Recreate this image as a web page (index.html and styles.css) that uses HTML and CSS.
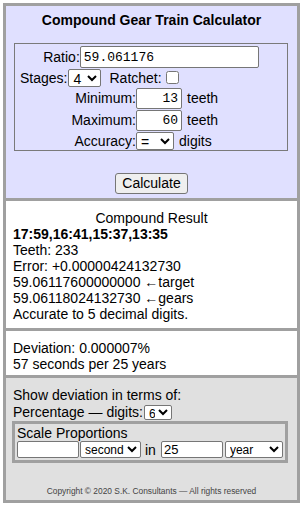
FILE: index.html
```html
<!DOCTYPE html>
<html lang="en">
<head>
    <meta charset="UTF-8">
    <meta name="viewport" content="width=device-width, initial-scale=1.0">
    <title>Compound Gear Train Calculator</title>
    <link rel="stylesheet" href="styles.css">
</head>
<body>
    <div class="calc">
        <div class="panel inputs">
            <h1>Compound Gear Train Calculator</h1>
            <div class="box">
                <div class="row row-ratio">
                    <label for="ratio">Ratio:</label>
                    <input type="text" id="ratio" class="mono ratio-input" value="59.061176">
                </div>
                <div class="row row-stages">
                    <label for="stages">Stages:</label>
                    <select id="stages" class="stages-select">
                        <option>4</option>
                    </select>
                    <label for="ratchet" class="ratchet-label">Ratchet:</label>
                    <input type="checkbox" id="ratchet">
                </div>
                <div class="row row-field">
                    <label for="minTeeth" class="field-label">Minimum:</label>
                    <input type="text" id="minTeeth" class="mono teeth-input" value="13">
                    <span class="unit">teeth</span>
                </div>
                <div class="row row-field">
                    <label for="maxTeeth" class="field-label">Maximum:</label>
                    <input type="text" id="maxTeeth" class="mono teeth-input" value="60">
                    <span class="unit">teeth</span>
                </div>
                <div class="row row-field row-last">
                    <label for="accuracy" class="field-label">Accuracy:</label>
                    <select id="accuracy" class="accuracy-select">
                        <option>=</option>
                    </select>
                    <span class="unit">digits</span>
                </div>
            </div>
            <div class="actions">
                <button onclick="calculate()">Calculate</button>
            </div>
        </div>

        <div class="panel result">
            <div class="result-title">Compound Result</div>
            <div class="gears">17:59,16:41,15:37,13:35</div>
            <div>Teeth: 233</div>
            <div>Error: +0.00000424132730</div>
            <div>59.06117600000000 &larr;target</div>
            <div>59.06118024132730 &larr;gears</div>
            <div>Accurate to 5 decimal digits.</div>
        </div>

        <div class="panel deviation">
            <div>Deviation: 0.000007%</div>
            <div>57 seconds per 25 years</div>
        </div>

        <div class="panel options">
            <div>Show deviation in terms of:</div>
            <div class="digits-row">
                Percentage &mdash; digits:<select class="digits-select"><option>6</option></select>
            </div>
            <div class="scale">
                <div>Scale Proportions</div>
                <div class="scale-row">
                    <input type="text" class="scale-input">
                    <select class="scale-select"><option>second</option></select>
                    <span class="scale-in">in</span>
                    <input type="text" class="scale-input" value="25">
                    <select class="scale-select scale-unit"><option>year</option></select>
                </div>
            </div>
            <div class="copyright">Copyright &copy; 2020 S.K. Consultants &mdash; All rights reserved</div>
        </div>
    </div>

    <script>
        function calculate() {
            // results are already filled in for the sample ratio
        }
    </script>
</body>
</html>
```

FILE: styles.css
```css
body {
    margin: 0;
    font-family: "Liberation Sans", Arial, sans-serif;
    font-size: 14px;
    color: #000;
    background: #fff;
}
.calc {
    box-sizing: border-box;
    width: 297px;
    margin: 3px 0 0 3px;
    border: 3px solid #a0a0a0;
}
.panel {
    border-bottom: 3px solid #a0a0a0;
    line-height: 16px;
}
.panel:last-child {
    border-bottom: none;
}
.inputs {
    background-color: #e0e0ff;
    height: 195px;
    box-sizing: border-box;
    padding-top: 6px;
}
h1 {
    margin: 0;
    font-size: 14px;
    line-height: 16px;
    text-align: center;
}
.box {
    margin: 15px 9px 0 8px;
    border: 1px solid #7a7a7a;
    padding-top: 2px;
}
.row {
    display: flex;
    align-items: center;
}
.row-ratio {
    height: 22px;
    justify-content: center;
}
.row-stages {
    height: 19px;
    padding-left: 5px;
}
.row-field {
    height: 22px;
}
.row-last {
    height: 19px;
}
.field-label {
    width: 121px;
    text-align: right;
}
input[type="text"] {
    box-sizing: border-box;
    border: 1px solid #767676;
    border-radius: 2px;
    background: #fff;
    color: #000;
    margin: 0;
}
.mono {
    font-family: "Liberation Mono", "Courier New", monospace;
    font-size: 13px;
    padding: 1px 3px;
}
.ratio-input {
    width: 179px;
    height: 22px;
    margin-left: 1px;
}
.teeth-input {
    width: 46px;
    height: 21px;
    text-align: right;
}
select {
    box-sizing: border-box;
    font-family: "Liberation Sans", Arial, sans-serif;
    font-size: 14px;
    line-height: 14px;
    color: #000;
    background: #fff;
    border: 1px solid #767676;
    border-radius: 2px;
    margin: 0;
    padding: 0;
}
.stages-select {
    width: 33px;
    height: 18px;
    margin-left: 1px;
}
.ratchet-label {
    margin-left: 8px;
}
input[type="checkbox"] {
    width: 13px;
    height: 13px;
    margin: 0 0 0 4px;
}
.accuracy-select {
    width: 38px;
    height: 18px;
}
.unit {
    margin-left: 5px;
}
.actions {
    text-align: center;
    margin-top: 22px;
}
button {
    font-family: "Liberation Sans", Arial, sans-serif;
    font-size: 14px;
    color: #000;
    background-color: #efefef;
    border: 1px solid #767676;
    border-radius: 3px;
    padding: 1px 6px;
    height: 21px;
    line-height: 17px;
}
.result {
    padding: 9px 7px 6px;
    height: 112px;
}
.result-title {
    text-align: center;
}
.gears {
    font-weight: bold;
}
.deviation {
    padding: 9px 7px 3px;
}
.options {
    background-color: #e0e0e0;
    padding: 9px 0 0;
    height: 113px;
}
.options > div:not(.scale) {
    padding: 0 7px;
}
.digits-row {
    height: 18px;
    display: flex;
    align-items: center;
}
.digits-select {
    width: 28px;
    height: 15px;
    margin-left: 1px;
    font-size: 12px;
    line-height: 12px;
}
.scale {
    margin: 0 9px 0 6px;
    border: 3px solid #a0a0a0;
    padding: 1px 2px 2px;
}
.scale-row {
    display: flex;
    align-items: center;
    height: 17px;
}
.scale-input {
    width: 62px;
    height: 17px;
    font-family: "Liberation Sans", Arial, sans-serif;
    font-size: 13px;
    padding: 0 2px;
}
.scale-select {
    width: 62px;
    height: 17px;
    margin-left: 1px;
    font-size: 12px;
    line-height: 12px;
}
.scale-in {
    margin: 0 5px 0 4px;
}
.scale-unit {
    width: 60px;
    margin-left: 2px;
}
.copyright {
    margin-top: 23px;
    font-size: 8.4px;
    line-height: 10px;
    color: #444;
    text-align: center;
}
```
